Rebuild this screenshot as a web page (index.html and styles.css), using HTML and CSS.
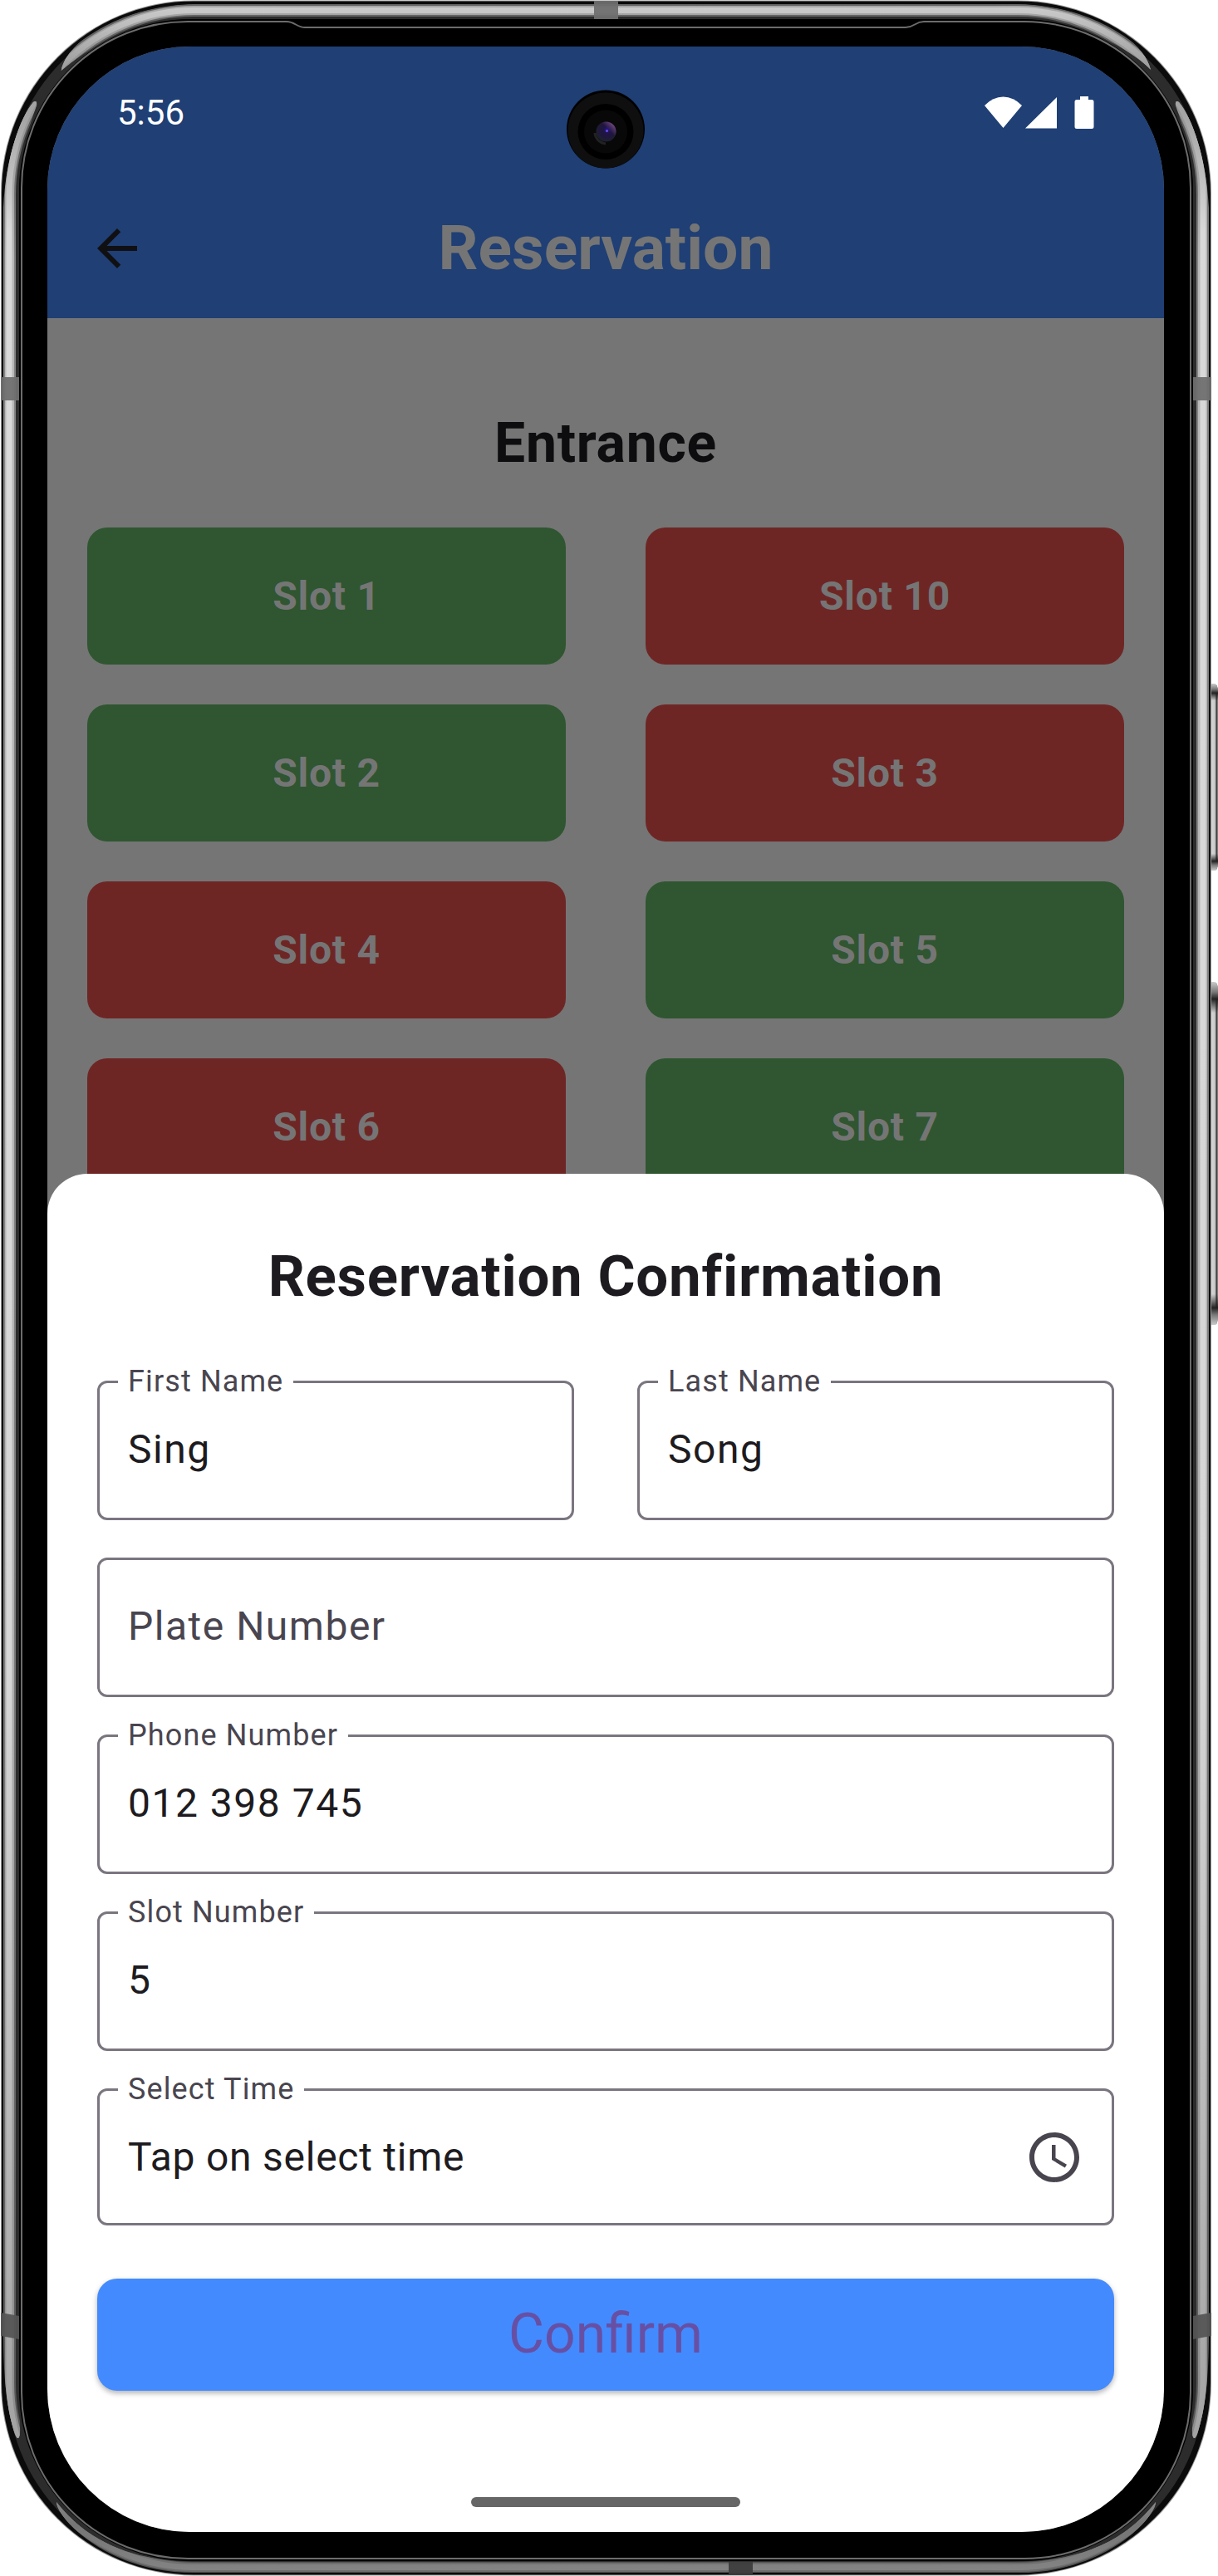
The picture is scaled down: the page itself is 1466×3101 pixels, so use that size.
FILE: index.html
```html
<!DOCTYPE html>
<html lang="en">
<head>
<meta charset="utf-8">
<title>Reservation</title>
<link rel="stylesheet" href="styles.css">
</head>
<body>
<div class="device">
  <svg class="frame" width="1466" height="3101" viewBox="0 0 1466 3101" aria-hidden="true">
    <defs>
      <linearGradient id="lowlight" x1="0" y1="0" x2="0" y2="3101" gradientUnits="userSpaceOnUse">
        <stop offset="0" stop-color="#666"/><stop offset=".04" stop-color="#5a5a5a"/><stop offset=".1" stop-color="#848484"/><stop offset=".6" stop-color="#808080"/><stop offset="1" stop-color="#505050"/>
      </linearGradient>
      <linearGradient id="midlight" x1="0" y1="0" x2="0" y2="3101" gradientUnits="userSpaceOnUse">
        <stop offset="0" stop-color="#aaa"/><stop offset=".03" stop-color="#8e8e8e"/><stop offset=".1" stop-color="#b8b8b8"/><stop offset=".6" stop-color="#b4b4b4"/><stop offset=".95" stop-color="#8c8c8c"/><stop offset="1" stop-color="#6c6c6c"/>
      </linearGradient>
      <linearGradient id="highlight" x1="0" y1="0" x2="0" y2="3101" gradientUnits="userSpaceOnUse">
        <stop offset="0" stop-color="#d0d0d0"/><stop offset=".025" stop-color="#a0a0a0"/><stop offset=".045" stop-color="#a4a4a4"/><stop offset=".09" stop-color="#d9d9d9"/><stop offset=".65" stop-color="#d6d6d6"/><stop offset=".92" stop-color="#a8a8a8"/><stop offset=".96" stop-color="#a0a0a0"/><stop offset=".98" stop-color="#757575"/><stop offset="1" stop-color="#858585"/>
      </linearGradient>
      <linearGradient id="button" x1="1457" x2="1466" gradientUnits="userSpaceOnUse">
        <stop offset="0" stop-color="#aaa"/><stop offset=".2" stop-color="#d5d5d5"/><stop offset=".6" stop-color="#c8c8c8"/><stop offset=".8" stop-color="#333"/><stop offset="1" stop-color="#999"/>
      </linearGradient>
      <linearGradient id="buttonEnds" x1="0" y1="0" x2="0" y2="1">
        <stop offset="0" stop-color="#ccc"/><stop offset=".03" stop-color="#777"/><stop offset=".05" stop-color="#222"/><stop offset=".09" stop-color="#222" stop-opacity="0"/><stop offset=".91" stop-color="#222" stop-opacity="0"/><stop offset=".95" stop-color="#222"/><stop offset=".97" stop-color="#777"/><stop offset="1" stop-color="#ccc"/>
      </linearGradient>
      <clipPath id="shine">
        <path d="M4 250C7 190 24 142 40 123Q45 120 44 127C34 155 20 205 19 255V2790C20 2840 25 2890 24 2930Q22 2940 18 2930C8 2900 4 2860 4 2810Z"/>
        <path d="M1455 250C1452 190 1435 142 1419 123Q1414 120 1415 127C1425 155 1439 205 1440 255V2790C1439 2840 1434 2890 1435 2930Q1437 2940 1441 2930C1451 2900 1455 2860 1455 2810Z"/>
        <path d="M74 84C82 50 140 5 250 4H1209C1320 5 1377 50 1385 84C1390 88 1330 22 1209 22H250C130 22 70 92 74 84Z"/>
        <path d="M68 3012C110 3066 170 3084 240 3084H1219C1289 3084 1349 3066 1391 3012C1391 3030 1330 3100 1219 3097H240C130 3100 68 3030 68 3012Z"/>
      </clipPath>
      <radialGradient id="lens" cx=".55" cy=".42" r=".6">
        <stop offset="0" stop-color="#2b138a"/><stop offset=".3" stop-color="#1d1545"/><stop offset=".65" stop-color="#21163a"/><stop offset="1" stop-color="#17242c"/>
      </radialGradient>
      <linearGradient id="glint" x1="0" y1="1" x2="1" y2="0">
        <stop offset=".6" stop-color="#8d559a" stop-opacity="0"/><stop offset="1" stop-color="#9c65a8"/>
      </linearGradient>
    </defs>
    <path d="M1457 823h4q5 0 5 10v206q0 9-5 9h-4z" fill="url(#button)"/>
    <path d="M1457 823h4q5 0 5 10v206q0 9-5 9h-4z" fill="url(#buttonEnds)"/>
    <path d="M1457 1182h4q5 0 5 10v393q0 10-5 10h-4z" fill="url(#button)"/>
    <path d="M1457 1182h4q5 0 5 10v393q0 10-5 10h-4z" fill="url(#buttonEnds)"/>
    <rect x="1" y=".5" width="1457" height="3100" rx="232" fill="#999"/>
    <rect x="2" y="1.5" width="1455" height="3098" rx="231" fill="#0b0b0b"/>
    <rect x="16" y="16" width="1427" height="3069" rx="216" fill="none" stroke="#2c2c2c" stroke-width="14"/>
    <g clip-path="url(#shine)" fill="none">
      <rect x="11.500" y="12.500" width="1436" height="3078" rx="222" stroke="url(#lowlight)" stroke-width="15"/>
      <rect x="11.500" y="12.500" width="1436" height="3078" rx="222" stroke="url(#midlight)" stroke-width="11"/>
      <rect x="11" y="12.500" width="1437" height="3078" rx="222" stroke="url(#highlight)" stroke-width="7"/>
    </g>
    <rect x="23" y="23" width="1413" height="3060" rx="206" fill="#000"/>
    <path d="M226 26H345C355 26 357 33 367 33H1090C1101 33 1101 26 1112 26H1233A200 200 0 0 1 1433 226V2880A200 200 0 0 1 1233 3080H226A200 200 0 0 1 26 2880V226A200 200 0 0 1 226 26Z" fill="#000" stroke="#6c6c6c" stroke-width="2"/>
    <g fill="#6f6f6f" fill-opacity=".94">
      <path d="M715 1h29v22h-29zM1 454h22v28H1zM1436 454h22v28h-22z"/>
      <path d="M1 2784l22 4v28l-22-4zM1458 2784l-22 4v28l22-4z" fill="#555"/>
      <path d="M877 3084h29v16h-29z" fill="#3d3d3d"/>
    </g>
  </svg>

  <main class="screen">
    <div class="status-bar">
      <span class="time">5:56</span>
      <svg class="status-icons" width="132" height="42" viewBox="0 0 132 42" fill="#fff" aria-hidden="true">
        <path d="M0 12Q10 1.500 22.500 1.500T45 12L22.500 39Z"/>
        <path d="M49 39.500L87 2V39.500Z"/>
        <path d="M115 1h10v4h4q2.500 0 2.500 2.500v30q0 2.500-2.500 2.500h-18q-2.500 0-2.500-2.500v-30q0-2.500 2.500-2.500h4z"/>
      </svg>
    </div>
    <header class="app-bar">
      <svg class="back" width="72" height="72" viewBox="0 0 24 24" fill="#101013" aria-label="Back"><path d="M20 11H7.830l5.590-5.590L12 4l-8 8 8 8 1.410-1.410L7.830 13H20v-2z"/></svg>
      <h1 class="app-title">Reservation</h1>
    </header>
    <section class="parking">
      <h2 class="entrance">Entrance</h2>
      <div class="slots">
        <div class="slot free">Slot 1</div><div class="slot taken">Slot 10</div>
        <div class="slot free">Slot 2</div><div class="slot taken">Slot 3</div>
        <div class="slot taken">Slot 4</div><div class="slot free">Slot 5</div>
        <div class="slot taken">Slot 6</div><div class="slot free">Slot 7</div>
      </div>
    </section>
    <section class="sheet">
      <h2 class="sheet-title">Reservation Confirmation</h2>
      <form class="form">
        <div class="row">
          <fieldset class="field"><legend>First Name</legend>Sing</fieldset>
          <fieldset class="field"><legend>Last Name</legend>Song</fieldset>
        </div>
        <div class="field placeholder">Plate Number</div>
        <fieldset class="field"><legend>Phone Number</legend>012 398 745</fieldset>
        <fieldset class="field"><legend>Slot Number</legend>5</fieldset>
        <fieldset class="field select-time"><legend>Select Time</legend>
          <div class="time-row"><span class="hint">Tap on select time</span>
          <svg width="72" height="72" viewBox="0 0 24 24" fill="#49454f" aria-hidden="true"><path d="M11.990 2C6.470 2 2 6.480 2 12s4.470 10 9.990 10C17.520 22 22 17.520 22 12S17.520 2 11.990 2zM12 20c-4.420 0-8-3.580-8-8s3.580-8 8-8 8 3.580 8 8-3.580 8-8 8zm.5-13H11v6l5.250 3.150.75-1.230-4.500-2.670z"/></svg></div>
        </fieldset>
        <button class="confirm" type="button">Confirm</button>
      </form>
      <div class="home-bar"></div>
    </section>
  </main>

  <svg class="camera" width="94" height="95" viewBox="0 0 94 95" aria-hidden="true">
    <circle cx="47" cy="47.500" r="47" fill="#000"/>
    <circle cx="47" cy="49" r="45.500" fill="#0f0f0f"/>
    <circle cx="47" cy="50.500" r="33.500" fill="#000"/>
    <circle cx="47" cy="50.500" r="26" fill="#080808"/>
    <path d="M34 52a14 14 0 0 0 13 13" fill="none" stroke="#222" stroke-width="3"/>
    <circle cx="47.500" cy="50.500" r="12" fill="url(#lens)"/>
    <circle cx="47.500" cy="50.500" r="12" fill="url(#glint)"/>
    <circle cx="48.500" cy="49.500" r="1.500" fill="#6a4cf0"/>
  </svg>
</div>
</body>
</html>
```
FILE: styles.css
```css
* { box-sizing: border-box; }
body { margin: 0; background: #fff; font-family: Roboto, sans-serif; }
h1, h2 { margin: 0; }

.device { position: relative; width: 1466px; height: 3101px; padding: 56px 65px 53px 57px; overflow: hidden; }
.frame { position: absolute; left: 0; top: 0; }
.camera { position: absolute; left: 682px; top: 108px; }

.screen {
  position: relative;
  display: flex;
  flex-direction: column;
  width: 1344px;
  height: 2992px;
  border-radius: 172px;
  overflow: hidden;
  background: #757575;
}

.status-bar {
  flex: none;
  display: flex;
  justify-content: space-between;
  align-items: center;
  height: 159px;
  padding: 0 84px;
  background: #1f3f75;
  color: #fff;
}
.time { font-size: 42px; line-height: 48px; }

.app-bar {
  flex: none;
  display: grid;
  grid-template-columns: 72px 1fr 72px;
  align-items: center;
  height: 168px;
  padding: 0 48px;
  background: #1f3f75;
}
.app-title { padding-bottom: 3px; font-size: 75px; line-height: 84px; font-weight: 700; text-align: center; color: #757575; }

.parking { flex: none; height: 1078px; margin-bottom: -48px; padding: 106px 48px 0; overflow: hidden; }
.entrance { height: 146px; font-size: 66px; line-height: 90px; letter-spacing: .75px; text-align: center; color: #0d0d0f; }
.slots { display: grid; grid-template-columns: 576px 576px; column-gap: 96px; row-gap: 48px; }
.slot {
  display: flex;
  align-items: center;
  justify-content: center;
  height: 165px;
  border-radius: 24px;
  font-size: 48px;
  font-weight: 700;
  letter-spacing: .75px;
  color: #757575;
}
.free { background: #2f5631; }
.taken { background: #6e2625; }

.sheet {
  position: relative;
  flex: 1;
  display: flex;
  flex-direction: column;
  padding: 0 60px;
  border-radius: 48px 48px 0 0;
  background: #fff;
}

.sheet-title { height: 249px; padding-top: 79px; font-size: 69px; line-height: 90px; letter-spacing: .75px; text-align: center; color: #1d1b20; }
.form { display: flex; flex-direction: column; gap: 45px; }
.row { display: grid; grid-template-columns: 574px 574px; justify-content: space-between; }
.field {
  min-width: 0;
  height: 168px;
  margin: 0;
  padding: 0 33px 0 34px;
  border: 3px solid #7a757f;
  border-radius: 12px;
  font-size: 48px;
  line-height: 160px;
  letter-spacing: 1.5px;
  color: #1d1b20;
}
.field legend {
  height: 3px;
  margin-left: -12px;
  padding: 0 12px;
  font-size: 36px;
  line-height: 3px;
  letter-spacing: 1.125px;
  color: #49454f;
}
.placeholder { color: #49454f; }
.select-time { height: 165px; line-height: 159px; }
.time-row { display: flex; justify-content: space-between; align-items: center; }
.hint { letter-spacing: .75px; }
.confirm {
  height: 135px;
  margin: 19px 0 0;
  padding: 0 0 3px;
  border: 0;
  border-radius: 24px;
  background: #448aff;
  box-shadow: 0 3px 6px rgba(0, 0, 0, .3);
  color: #6750a4;
  font-family: inherit;
  font-size: 66px;
}
.home-bar { width: 324px; height: 12px; margin: auto auto 30px; border-radius: 6px; background: #666; }
```
